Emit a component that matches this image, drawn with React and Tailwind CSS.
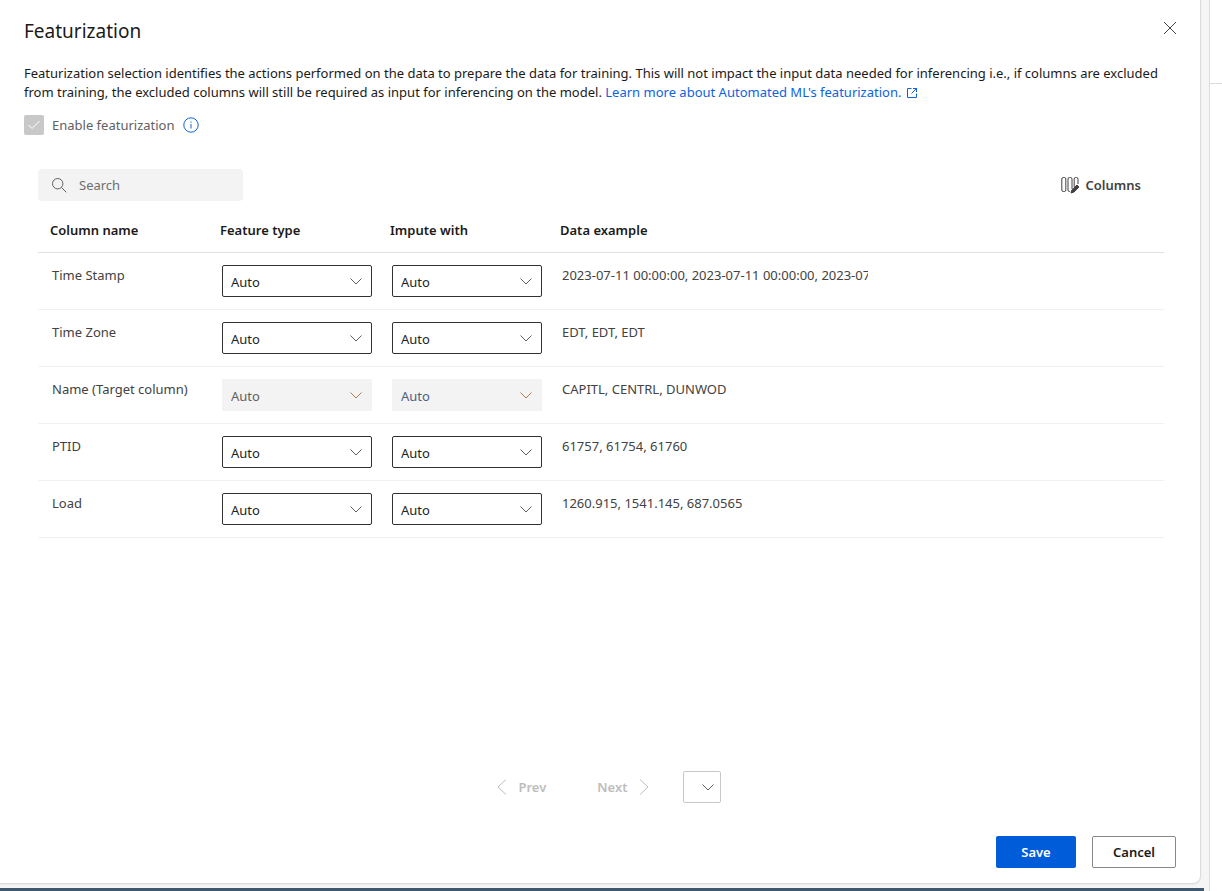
import React, { useState } from 'react';

const rows = [
  { name: 'Time Stamp', example: '2023-07-11 00:00:00, 2023-07-11 00:00:00, 2023-07-11 00:00:00' },
  { name: 'Time Zone', example: 'EDT, EDT, EDT' },
  { name: 'Name (Target column)', example: 'CAPITL, CENTRL, DUNWOD', isTarget: true },
  { name: 'PTID', example: '61757, 61754, 61760' },
  { name: 'Load', example: '1260.915, 1541.145, 687.0565' },
];

function Chevron({ className = '' }) {
  return (
    <svg className={className} width="12" height="7" viewBox="0 0 12 7" fill="none" stroke="currentColor">
      <path d="M0.5 0.5 L6 6 L11.5 0.5" />
    </svg>
  );
}

function AutoSelect({ label, disabled, textClass = 'text-[#616161]' }) {
  return (
    <div className="relative">
      <select
        aria-label={label}
        disabled={disabled}
        className={`block w-full h-8 pl-2 pr-8 pt-[2px] appearance-none border ${
          disabled ? `bg-[#f3f3f3] border-[#f3f3f3] opacity-100 ${textClass}` : 'rounded-xs bg-white border-[#323130] text-[#201f1e]'
        }`}
      >
        <option>Auto</option>
        <option>Numeric</option>
        <option>Categorical</option>
      </select>
      <Chevron
        className={`absolute right-[10px] top-[13px] pointer-events-none ${disabled ? 'text-[#b07a4a]' : 'text-[#605e5c]'}`}
      />
    </div>
  );
}

export default function App() {
  const [search, setSearch] = useState('');
  const visibleRows = rows.filter(row => row.name.toLowerCase().includes(search.toLowerCase()));

  return (
    <div className="flex min-h-screen bg-[#f5f5f5] font-['Noto_Sans',sans-serif] text-[13px] leading-5 text-[#1b1a19]">
      <div className="flex-1 min-w-0 flex flex-col">
        <section className="flex-1 flex flex-col mr-[3px] bg-white border-r border-b border-[#dcdcdc] rounded-br-lg shadow-xs">
          <header className="flex justify-between items-start pl-6 pr-5 pt-[18px]">
            <h1 className="text-[19px] leading-[26px]">Featurization</h1>
            <button aria-label="Close" className="p-[3px] text-[#424242]">
              <svg width="14" height="14" viewBox="0 0 14 14" fill="none" stroke="currentColor">
                <path d="M1 1 L13 13 M13 1 L1 13" />
              </svg>
            </button>
          </header>

          <div className="pl-6 pr-6 pt-5">
            <p className="leading-[19px]">
              Featurization selection identifies the actions performed on the data to prepare the data for training. This
              will not impact the input data needed for inferencing i.e., if columns are excluded from training, the
              excluded columns will still be required as input for inferencing on the model.{' '}
              <a href="#featurization" className="text-[#0f62de]">
                Learn more about Automated ML's featurization.
                <svg className="inline ml-[6px] align-[-1px]" width="10" height="10" viewBox="0 0 10 10" fill="none" stroke="currentColor">
                  <path d="M4.5 0.5 H0.5 V9.5 H9.5 V5.5 M6 0.5 H9.5 V4 M9.5 0.5 L4.5 5.5" />
                </svg>
              </a>
            </p>
            <div className="flex items-center gap-2 mt-[13px]">
              <label className="flex items-center gap-2 text-[#616161]">
                <span className="relative flex">
                  <input type="checkbox" defaultChecked disabled className="w-5 h-5 appearance-none rounded-xs bg-[#c8c8c8]" />
                  <svg className="absolute left-1 top-[5px]" width="12" height="10" viewBox="0 0 12 10" fill="none" stroke="#fff">
                    <path d="M0.5 5 L4 8.5 L11.5 1" />
                  </svg>
                </span>
                Enable featurization
              </label>
              <button aria-label="About featurization" className="text-[#0f62de]">
                <svg width="16" height="16" viewBox="0 0 16 16" fill="none" stroke="currentColor">
                  <circle cx="8" cy="8" r="7.2" />
                  <path d="M8 7 V11.5 M8 4.5 V5.7" />
                </svg>
              </button>
            </div>
          </div>

          <div className="flex-1 flex flex-col pl-[38px] pr-9 pt-[34px]">
            <div className="flex justify-between items-center">
              <label className="flex items-center w-[205px] h-8 pl-[14px] gap-3 rounded bg-[#f3f3f3] text-[#616161]">
                <svg className="shrink-0" width="15" height="15" viewBox="0 0 15 15" fill="none" stroke="currentColor">
                  <circle cx="5.7" cy="5.7" r="5.2" />
                  <path d="M9.5 9.5 L14.3 14.3" />
                </svg>
                <input
                  type="text"
                  aria-label="Search"
                  placeholder="Search"
                  value={search}
                  onChange={e => setSearch(e.target.value)}
                  className="w-full min-w-0 bg-transparent outline-none placeholder:text-[#6e6e6e]"
                />
              </label>
              <button className="flex items-center gap-[6px] mr-[23px] font-semibold text-[#424242]">
                <svg width="19" height="18" viewBox="0 0 19 18" fill="none" stroke="currentColor">
                  <rect x="0.8" y="1.5" width="4" height="14" rx="1.5" />
                  <path d="M11 13 V3 Q11 1.5 9.5 1.5 H8.5 Q7 1.5 7 3 V14 Q7 15.5 8.5 15.5 H9" />
                  <path d="M13.2 11 V3 Q13.2 1.5 14.7 1.5 H15.5 Q17 1.5 17 3 V8" />
                  <path d="M10 17 L10.8 14 L16 9 L18 11 L13 16 Z" fill="currentColor" />
                </svg>
                Columns
              </button>
            </div>

            <table className="w-full table-fixed border-collapse">
              <colgroup>
                <col className="w-[170px]" />
                <col className="w-[170px]" />
                <col className="w-[170px]" />
                <col />
              </colgroup>
              <thead>
                <tr className="h-[51px] border-b border-[#e1e1e1] text-left">
                  <th className="px-3 pt-[19px] font-semibold align-top">Column name</th>
                  <th className="px-3 pt-[19px] font-semibold align-top">Feature type</th>
                  <th className="px-3 pt-[19px] font-semibold align-top">Impute with</th>
                  <th className="px-3 pt-[19px] font-semibold align-top">Data example</th>
                </tr>
              </thead>
              <tbody>
                {visibleRows.map(row => (
                  <tr key={row.name} className="h-[57px] border-b border-[#f0f0f0] text-[#424242] align-top">
                    <td className="pl-[14px] pt-3 whitespace-nowrap">{row.name}</td>
                    <td className="pl-[14px] pr-[6px] pt-3">
                      <AutoSelect label={`Feature type for ${row.name}`} disabled={row.isTarget} />
                    </td>
                    <td className="pl-[14px] pr-[6px] pt-3">
                      <AutoSelect label={`Impute with for ${row.name}`} disabled={row.isTarget} textClass="text-[#4f5f80]" />
                    </td>
                    <td className="pl-[14px] pt-3">
                      <div className="max-w-[306px] overflow-hidden whitespace-nowrap">{row.example}</div>
                    </td>
                  </tr>
                ))}
              </tbody>
            </table>

            <nav aria-label="Pagination" className="flex items-center justify-center mt-auto pl-4 text-[#bdbdbd] font-semibold">
              <button disabled className="flex items-center gap-[11px]">
                <svg width="10" height="16" viewBox="0 0 10 16" fill="none" stroke="currentColor">
                  <path d="M9 0.5 L1 8 L9 15.5" />
                </svg>
                Prev
              </button>
              <button disabled className="flex items-center gap-[11px] ml-[51px]">
                Next
                <svg width="10" height="16" viewBox="0 0 10 16" fill="none" stroke="currentColor">
                  <path d="M1 0.5 L9 8 L1 15.5" />
                </svg>
              </button>
              <div className="relative ml-[34px]">
                <select aria-label="Page" className="block w-[38px] h-8 appearance-none rounded-xs border border-[#c8c8c8] bg-white" />
                <Chevron className="absolute right-[7px] top-[13px] pointer-events-none text-[#605e5c]" />
              </div>
            </nav>
          </div>

          <footer className="flex justify-end gap-4 pr-6 pt-[33px] pb-[15px] font-semibold">
            <button className="w-20 h-8 rounded-xs bg-[#015cda] text-white">Save</button>
            <button className="w-[84px] h-8 rounded-xs border border-[#8a8886] bg-white text-[#1b1a19]">Cancel</button>
          </footer>
        </section>
        <div className="mt-1 h-[3px] bg-[#40586e]" />
      </div>

      <aside className="w-[13px] ml-[5px] border-l border-[#dcdcdc] bg-white">
        <div className="h-[84px] border-b border-[#dcdcdc]" />
      </aside>
    </div>
  );
}
